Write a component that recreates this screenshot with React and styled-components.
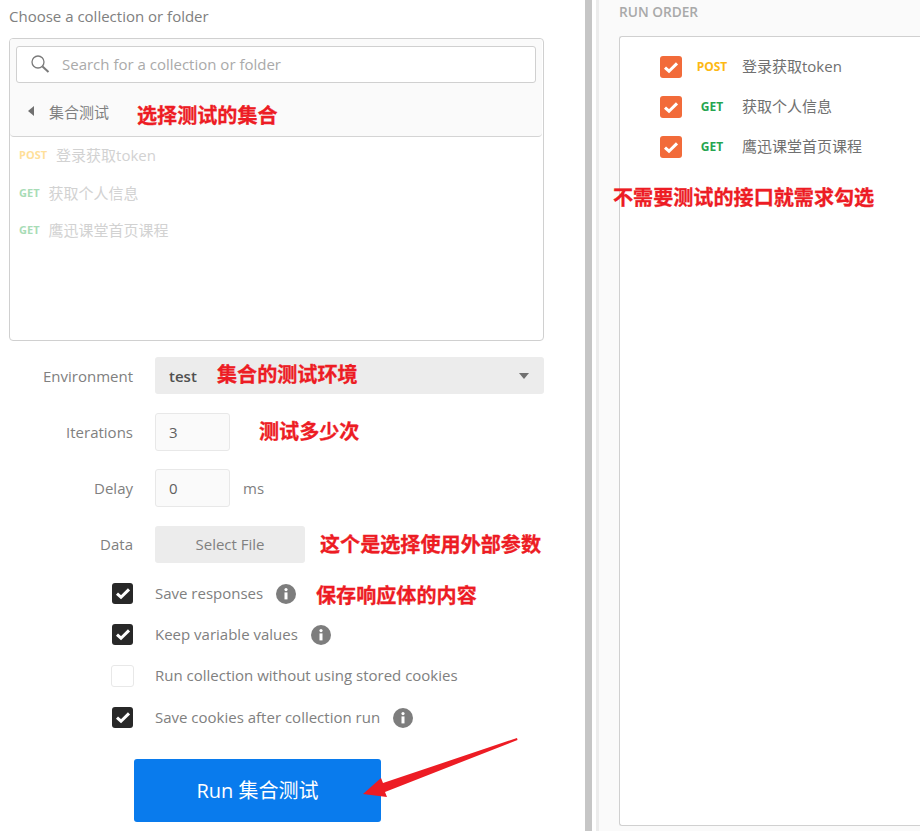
import React from "react";
import styled, { createGlobalStyle } from "styled-components";

const Global = createGlobalStyle`
  html, body { margin: 0; padding: 0; background: #fff; }
  body { font-family: "Open Sans", "Noto Sans CJK SC", sans-serif; overflow: hidden; }
`;
const Page = styled.div`
  position: relative;
  width: 920px;
  height: 831px;
  overflow: hidden;
  display: grid;
  grid-template-columns: 585px 7px 4px 1fr;
  background: #fff;
`;
const Left = styled.section`
  padding: 8px 0 0 9px;
  display: flex;
  flex-direction: column;
  align-items: flex-start;
`;
const Divider = styled.div`background: #c6c6c6;`;
const Gap = styled.div`background: #fff;`;
const Right = styled.section`
  background: #fafafa;
  border-left: 3px solid #ececec;
  padding: 4px 0 0 20px;
  display: flex;
  flex-direction: column;
`;
const ChooseLabel = styled.div`
  font-size: 15px;
  line-height: 17px;
  color: #808080;
  height: 30px;
`;
const Card = styled.div`
  box-sizing: border-box;
  width: 535px;
  height: 303px;
  border: 1px solid #d0d0d0;
  border-radius: 4px;
  display: flex;
  flex-direction: column;
`;
const CardHead = styled.div`
  box-sizing: border-box;
  height: 98px;
  margin-right: 1px;
  background: #fafafa;
  border-bottom: 1px solid #d4d4d4;
  border-radius: 3px 3px 4px 4px;
  padding: 7px 6px 0 6px;
`;
const Search = styled.div`
  box-sizing: border-box;
  height: 37px;
  background: #fff;
  border: 1px solid #d0d0d0;
  border-radius: 3px;
  display: flex;
  align-items: center;
  padding: 0 0 2px 13px;
  gap: 12px;
  font-size: 15px;
  color: #aaa;
`;
const Crumb = styled.div`
  box-sizing: border-box;
  display: flex;
  align-items: center;
  height: 50px;
  margin-top: 4px;
  padding: 0 0 2px 12px;
  gap: 15px;
  font-size: 15px;
  color: #808080;
`;
const Caret = styled.span`
  width: 0;
  height: 0;
  border-top: 5px solid transparent;
  border-bottom: 5px solid transparent;
  border-right: 6px solid #707070;
`;
const ReqList = styled.div`
  display: flex;
  flex-direction: column;
  padding: 0 0 0 9px;
`;
const Req = styled.div`
  display: flex;
  align-items: center;
  height: 37.5px;
  gap: 9px;
  font-size: 15px;
  color: #d2d2d2;
  &:first-child { margin-top: -0.8px; }
`;
const FadedMethod = styled.span`
  font-size: 11px;
  font-weight: 700;
  color: ${(p) => (p.$post ? "#ffe09a" : "#a8dcb6")};
`;
const Form = styled.div`
  display: flex;
  flex-direction: column;
  margin-top: 16px;
`;
const FormRow = styled.div`
  display: grid;
  grid-template-columns: 124px 1fr;
  grid-template-rows: 37px;
  column-gap: 22px;
  align-items: center;
  height: 37px;
  margin-bottom: 19px;
  font-size: 15px;
`;
const RowLabel = styled.div`
  text-align: right;
  color: #808080;
`;
const Select = styled.div`
  box-sizing: border-box;
  width: 389px;
  height: 37px;
  background: #ececec;
  border-radius: 3px;
  display: flex;
  align-items: center;
  justify-content: space-between;
  padding: 0 15px 0 14px;
  color: #505050;
  font-weight: 600;
`;
const DownCaret = styled.span`
  width: 0;
  height: 0;
  border-left: 5px solid transparent;
  border-right: 5px solid transparent;
  border-top: 6px solid #707070;
`;
const Unit = styled.div`
  display: flex;
  align-items: center;
  gap: 13px;
  color: #808080;
`;
const NumBox = styled.div`
  box-sizing: border-box;
  width: 75px;
  height: 38px;
  background: #fafafa;
  border: 1px solid #e8e8e8;
  border-radius: 3px;
  display: flex;
  align-items: center;
  padding-left: 13px;
  color: #606060;
`;
const FileBtn = styled.div`
  box-sizing: border-box;
  width: 150px;
  height: 37px;
  align-self: start;
  margin-top: 1px;
  padding-bottom: 2px;
  background: #ececec;
  border-radius: 3px;
  display: flex;
  align-items: center;
  justify-content: center;
  color: #808080;
`;
const Options = styled.div`
  display: flex;
  flex-direction: column;
  margin: -8.5px 0 0 102px;
`;
const Option = styled.div`
  display: flex;
  align-items: center;
  height: 41.33px;
  font-size: 15px;
  color: #808080;
`;
const OptionText = styled.span`
  margin-top: -1px;
`;
const Box = styled.span`
  box-sizing: border-box;
  flex: none;
  width: ${(p) => (p.$on ? 21 : 23)}px;
  height: ${(p) => (p.$on ? 21 : 22)}px;
  border-radius: 3px;
  margin: ${(p) => (p.$on ? "0 22px 0 1px" : "0 21px 0 0")};
  display: flex;
  align-items: center;
  justify-content: center;
  background: ${(p) => (p.$on ? "#282828" : "#fff")};
  border: ${(p) => (p.$on ? "none" : "1px solid #e8e8e8")};
`;
const Info = styled.span`
  flex: none;
  width: 20px;
  height: 20px;
  margin: 2px 0 0 13px;
  display: inline-flex;
`;
const RunBtn = styled.button`
  width: 247px;
  height: 63px;
  margin: 21.2px 0 0 125px;
  padding: 0 0 2px;
  border: none;
  border-radius: 3px;
  background: #097bed;
  color: #fff;
  font: 400 20px "Open Sans", "Noto Sans CJK SC", sans-serif;
`;
const OrderTitle = styled.div`
  font-size: 13.7px;
  font-weight: 600;
  line-height: 16px;
  color: #a9a9a9;
  height: 32px;
`;
const OrderCard = styled.div`
  box-sizing: border-box;
  width: 320px;
  height: 790px;
  background: #fff;
  border: 1px solid #d0d0d0;
  border-right: none;
  border-radius: 3px 0 0 3px;
  padding: 8px 0 0 40px;
  display: flex;
  flex-direction: column;
`;
const OrderRow = styled.div`
  display: flex;
  align-items: center;
  height: 40px;
  font-size: 15px;
  color: #707070;
`;
const OrangeBox = styled.span`
  flex: none;
  width: 22px;
  height: 22px;
  margin-top: 4px;
  border-radius: 3px;
  background: #f26b3a;
  display: flex;
  align-items: center;
  justify-content: center;
`;
const OrderMethod = styled.span`
  flex: none;
  width: 60px;
  margin-top: 2px;
  text-align: center;
  font-size: 12px;
  font-weight: 700;
  color: ${(p) => (p.$post ? "#fdb813" : "#26a550")};
`;
const Note = styled.div`
  position: absolute;
  left: ${(p) => p.$x}px;
  top: ${(p) => p.$y}px;
  font: 700 20.1px/26px "Noto Sans CJK SC", sans-serif;
  -webkit-text-stroke: 0.3px #ed1c24;
  color: #ed1c24;
  white-space: nowrap;
`;
const Arrow = styled.svg`
  position: absolute;
  left: 360px;
  top: 735px;
`;

const Check = () => (
  <svg width="16" height="13" viewBox="0 0 16 13" fill="none">
    <path d="M2 6.6 6 10.2 14 2.4" stroke="#fff" strokeWidth="3" />
  </svg>
);
const InfoIcon = () => (
  <svg width="20" height="20" viewBox="0 0 20 20">
    <circle cx="10" cy="10" r="10" fill="#7d7d7d" />
    <circle cx="10" cy="5.6" r="1.6" fill="#fff" />
    <rect x="8.5" y="8.4" width="3" height="7" fill="#fff" />
  </svg>
);
const SearchIcon = () => (
  <svg width="20" height="20" viewBox="0 0 20 20" fill="none" stroke="#7a7a7a">
    <circle cx="8" cy="8" r="6" strokeWidth="1.3" />
    <path d="M12.5 12.5 18.5 18" strokeWidth="2" />
  </svg>
);

const requests = [
  { m: "POST", name: "登录获取token" },
  { m: "GET", name: "获取个人信息" },
  { m: "GET", name: "鹰迅课堂首页课程" },
];
const options = [
  { on: true, text: "Save responses", info: true },
  { on: true, text: "Keep variable values", info: true },
  { on: false, text: "Run collection without using stored cookies" },
  { on: true, text: "Save cookies after collection run", info: true },
];
const notes = [
  { x: 137, y: 102, t: "选择测试的集合" },
  { x: 217, y: 361, t: "集合的测试环境" },
  { x: 259, y: 418, t: "测试多少次" },
  { x: 320, y: 531, t: "这个是选择使用外部参数" },
  { x: 316, y: 582, t: "保存响应体的内容" },
  { x: 613, y: 184, t: "不需要测试的接口就需求勾选" },
];

export default function App() {
  return (
    <Page>
      <Global />
      <Left>
        <ChooseLabel>Choose a collection or folder</ChooseLabel>
        <Card>
          <CardHead>
            <Search>
              <SearchIcon />
              Search for a collection or folder
            </Search>
            <Crumb>
              <Caret />
              集合测试
            </Crumb>
          </CardHead>
          <ReqList>
            {requests.map((r) => (
              <Req key={r.name}>
                <FadedMethod $post={r.m === "POST"}>{r.m}</FadedMethod>
                {r.name}
              </Req>
            ))}
          </ReqList>
        </Card>
        <Form>
          <FormRow>
            <RowLabel>Environment</RowLabel>
            <Select>
              test
              <DownCaret />
            </Select>
          </FormRow>
          <FormRow>
            <RowLabel>Iterations</RowLabel>
            <NumBox>3</NumBox>
          </FormRow>
          <FormRow>
            <RowLabel>Delay</RowLabel>
            <Unit>
              <NumBox>0</NumBox>
              ms
            </Unit>
          </FormRow>
          <FormRow>
            <RowLabel>Data</RowLabel>
            <FileBtn>Select File</FileBtn>
          </FormRow>
        </Form>
        <Options>
          {options.map((o) => (
            <Option key={o.text}>
              <Box $on={o.on}>{o.on && <Check />}</Box>
              <OptionText>{o.text}</OptionText>
              {o.info && (
                <Info>
                  <InfoIcon />
                </Info>
              )}
            </Option>
          ))}
        </Options>
        <RunBtn>Run 集合测试</RunBtn>
      </Left>
      <Divider />
      <Gap />
      <Right>
        <OrderTitle>RUN ORDER</OrderTitle>
        <OrderCard>
          {requests.map((r) => (
            <OrderRow key={r.name}>
              <OrangeBox>
                <Check />
              </OrangeBox>
              <OrderMethod $post={r.m === "POST"}>{r.m}</OrderMethod>
              {r.name}
            </OrderRow>
          ))}
        </OrderCard>
      </Right>
      {notes.map((n) => (
        <Note key={n.t} $x={n.x} $y={n.y}>
          {n.t}
        </Note>
      ))}
      <Arrow width="160" height="70" viewBox="0 0 160 70">
        <path d="M3 59 21 43 23 48 157 3 157.5 5 25 57 27 62Z" fill="#ed1c24" />
      </Arrow>
    </Page>
  );
}
